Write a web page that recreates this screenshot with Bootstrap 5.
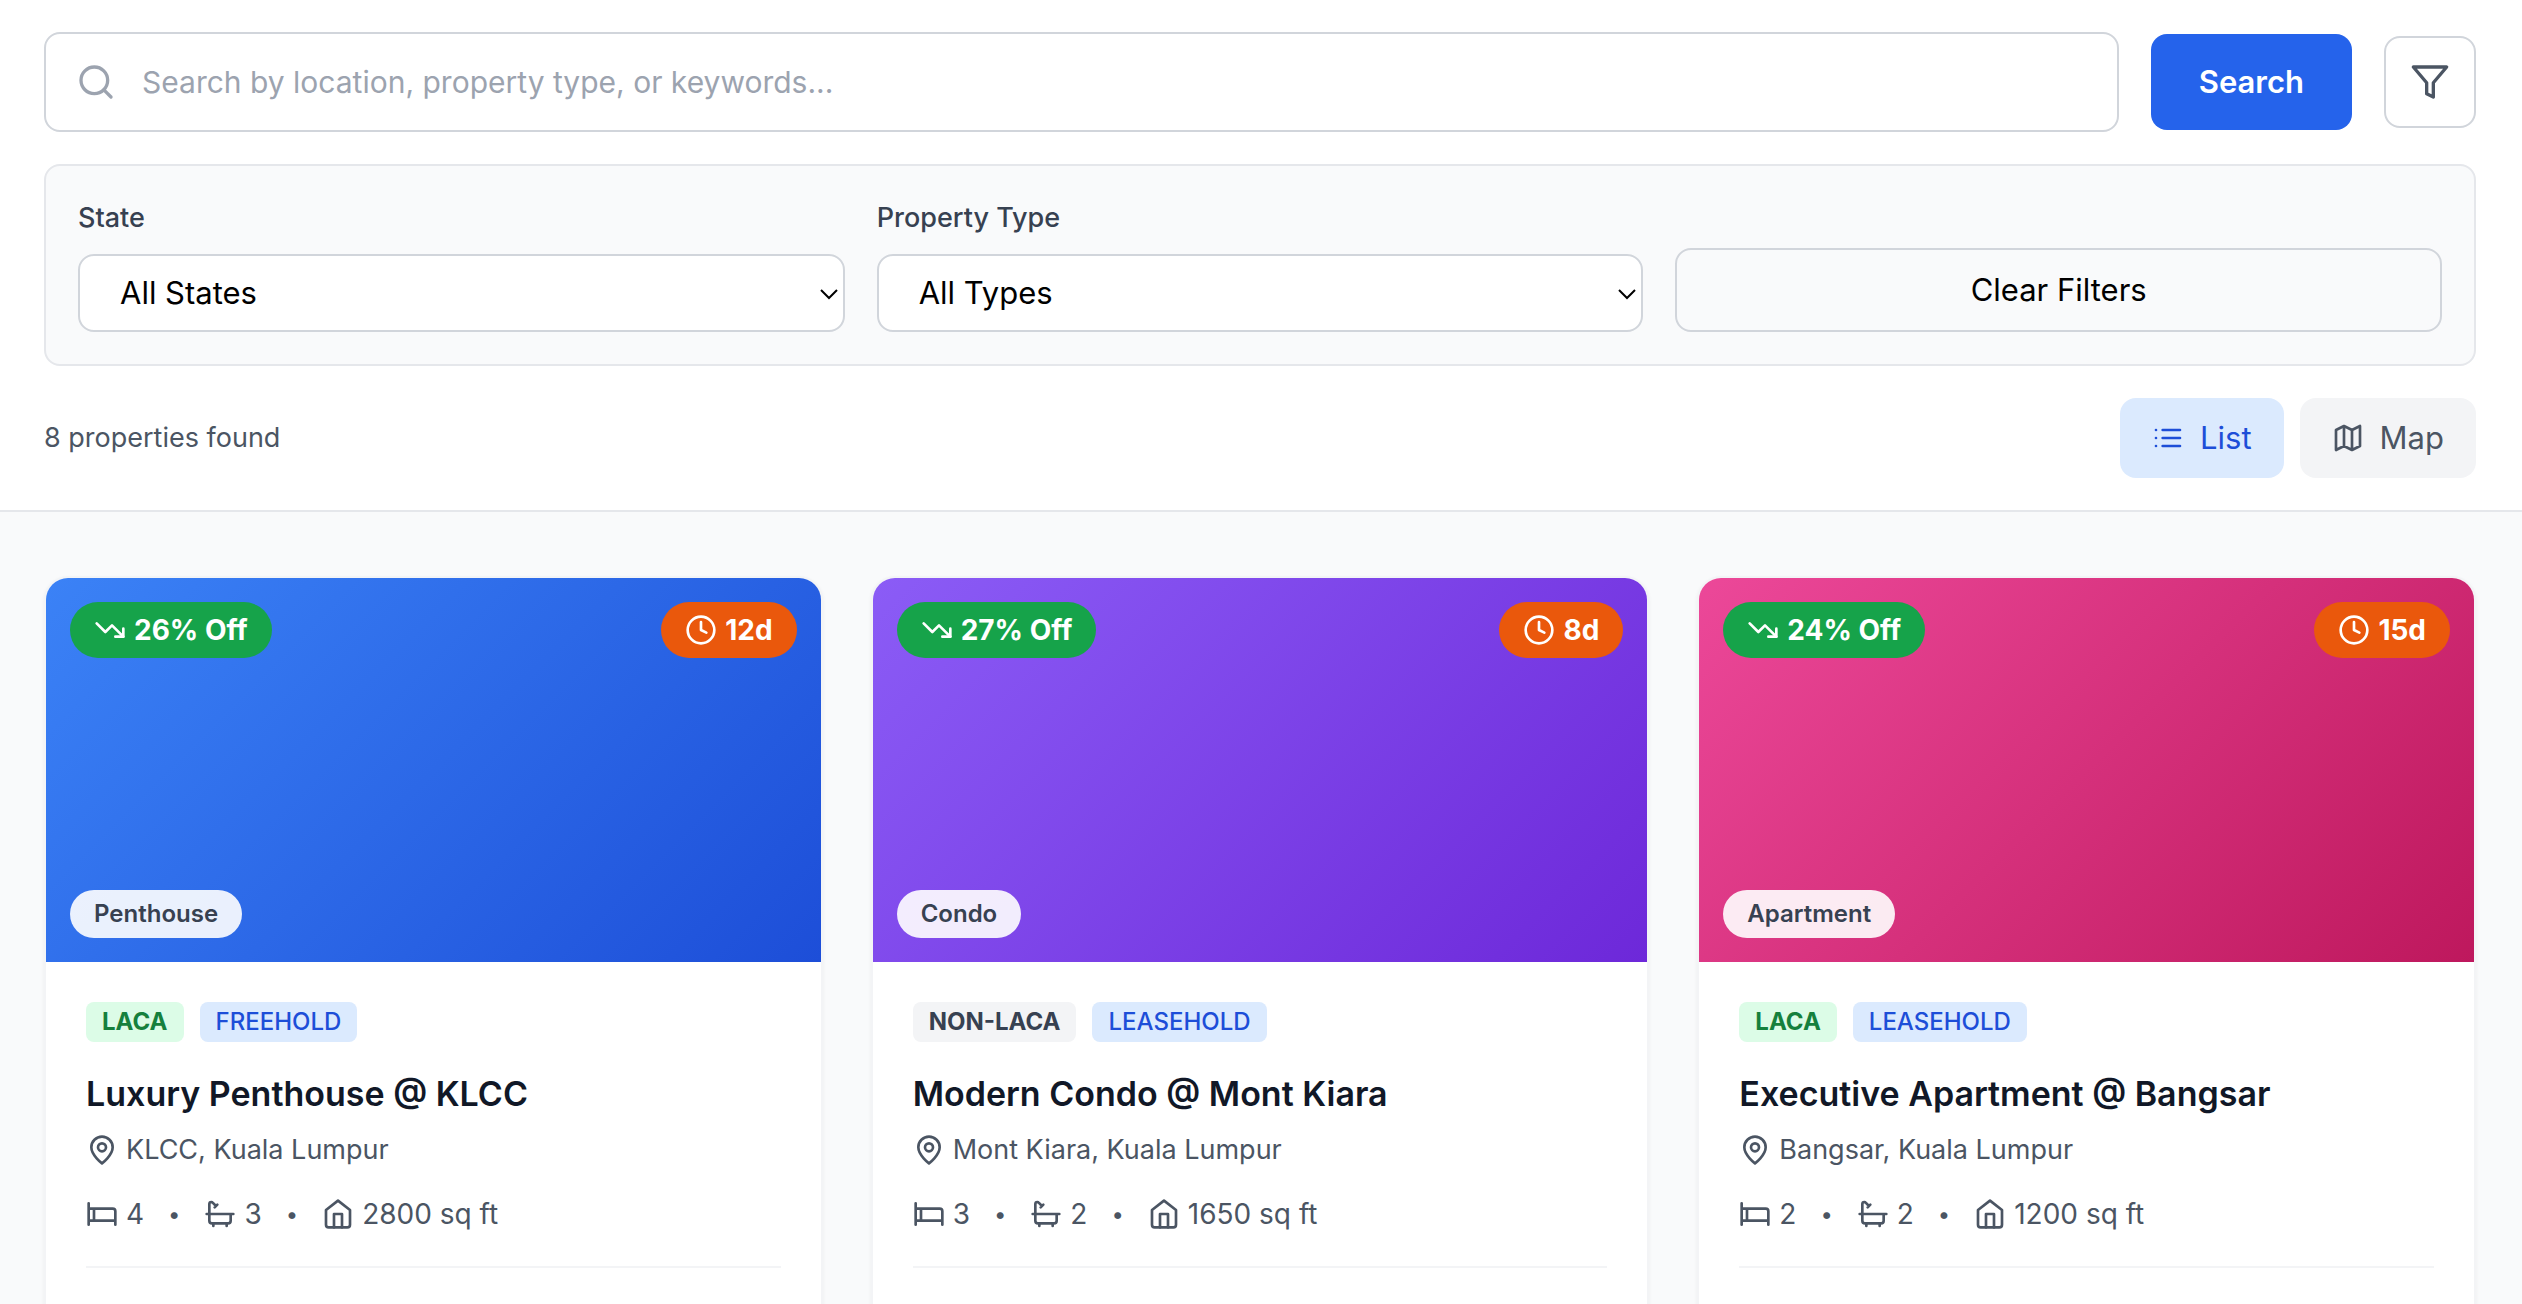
<!DOCTYPE html>
<html lang="en">
<head>
<meta charset="utf-8">
<meta name="viewport" content="width=device-width, initial-scale=1">
<title>Property listings</title>
<link href="https://cdn.jsdelivr.net/npm/bootstrap@5.3.0/dist/css/bootstrap.min.css" rel="stylesheet">
<style>
body{font-family:Inter,"Liberation Sans",sans-serif;font-size:32px;line-height:48px;color:#111827;background:#f9fafb}
.wrap{max-width:2496px;margin:0 auto;padding-left:31px;padding-right:33px}
.ico{width:32px;height:32px;flex:none;fill:none;stroke:currentColor;stroke-width:2;stroke-linecap:round;stroke-linejoin:round}
.ico-lg{width:40px;height:40px}
.topbar{background:#fff;border-bottom:2px solid #e5e7eb;padding:32px 0}
.gap-32{gap:32px}.gap-16{gap:16px}.gap-8{gap:8px}
.search-field{height:100px;border:2px solid #d1d5db;border-radius:16px;padding:0 30px;gap:26px;color:#9ca3af;background:#fff}
.search-field input{border:0;outline:0;background:none;color:#111827;font-size:30px;padding:0;min-width:0}
.search-field input::placeholder{color:#9ca3af;opacity:1}
.btn-search{background:#2563eb;color:#fff;font-weight:600;font-size:31px;line-height:48px;padding:24px 48px;border:0;border-radius:16px}
.btn-filter{width:92px;height:92px;border:2px solid #d1d5db;border-radius:16px;background:#fff;color:#4b5563}
.panel{background:#f9fafb;border:2px solid #e5e7eb;border-radius:16px;padding:32px}
.panel label{font-size:27px;line-height:40px;font-weight:500;color:#374151}
.pick{position:relative;color:#000}
.pick select{appearance:none;width:100%;height:78px;border:2px solid #d1d5db;border-radius:16px;background:#fff;padding:0 40px;font-size:31px;color:#000}
.pick svg{position:absolute;right:6px;top:30px;width:20px;height:20px;pointer-events:none}
.btn-clear{height:84px;border:2px solid #d1d5db;border-radius:16px;background:none;color:#000;font-size:31px}
.found{font-size:27px;line-height:40px;color:#4b5563}
.btn-view{border:0;border-radius:16px;padding:16px 32px;background:#f3f4f6;color:#4b5563;font-size:31px;line-height:48px}
.btn-view.active{background:#dbeafe;color:#1d4ed8}
.listing-grid{padding-top:64px;padding-bottom:64px}
.tiles{display:grid;grid-template-columns:repeat(3,1fr);gap:48px}
.tile{background:#fff;border:2px solid #f3f4f6;border-radius:24px;overflow:hidden;box-shadow:0 2px 4px rgba(0,0,0,.05)}
.photo{height:384px;padding:24px}
.photo-blue{background:linear-gradient(135deg,#3b82f6,#1d4ed8)}
.photo-violet{background:linear-gradient(135deg,#8b5cf6,#6d28d9)}
.photo-pink{background:linear-gradient(135deg,#ec4899,#be185d)}
.pill{border-radius:28px;padding:8px 24px;font-size:28px;line-height:40px;font-weight:700;color:#fff}
.pill-off{background:#16a34a}.pill-days{background:#ea580c}
.pill-kind{border-radius:24px;padding:8px 24px;font-size:24px;line-height:32px;font-weight:600;color:#374151;background:rgba(255,255,255,.9)}
.info{padding:40px 40px 120px}
.tag{border-radius:8px;padding:4px 16px;font-size:24px;line-height:32px;font-weight:500;background:#dbeafe;color:#1d4ed8}
.tag-laca{font-weight:700;background:#dcfce7;color:#15803d}
.tag-non{font-weight:700;background:#f3f4f6;color:#374151}
.tile h2{font-size:34px;line-height:56px;font-weight:600;margin:24px 0 8px;color:#111827}
.meta{font-size:27px;line-height:40px;color:#4b5563}
.facts{font-size:28px;margin-top:24px;padding-bottom:32px;border-bottom:2px solid #f3f4f6;gap:24px}
.sep{font-size:22px}
</style>
</head>
<body>
<header class="topbar">
  <div class="wrap d-flex flex-column gap-32">
    <form class="d-flex align-items-center gap-32" role="search" onsubmit="return false">
      <div class="search-field d-flex align-items-center flex-grow-1">
        <svg class="ico ico-lg" viewBox="0 0 24 24" aria-hidden="true"><circle cx="11" cy="11" r="8"/><path d="m21 21-4.3-4.3"/></svg>
        <input class="flex-grow-1" type="text" aria-label="Search properties" placeholder="Search by location, property type, or keywords...">
      </div>
      <button class="btn btn-search" type="submit">Search</button>
      <button class="btn btn-filter d-flex align-items-center justify-content-center p-0" type="button" aria-label="Filters">
        <svg class="ico ico-lg" viewBox="0 0 24 24" aria-hidden="true"><path d="M22 3H2l8 9.46V19l4 2v-8.54L22 3z"/></svg>
      </button>
    </form>
    <section class="panel d-flex align-items-end gap-32">
      <div class="flex-fill w-100">
        <label class="d-block mb-3" for="state">State</label>
        <div class="pick">
          <select class="d-block" id="state"><option>All States</option></select>
          <svg viewBox="0 0 20 20" fill="none" stroke="currentColor" stroke-width="2" aria-hidden="true"><path d="m2 6 8 8 8-8"/></svg>
        </div>
      </div>
      <div class="flex-fill w-100">
        <label class="d-block mb-3" for="kind">Property Type</label>
        <div class="pick">
          <select class="d-block" id="kind"><option>All Types</option></select>
          <svg viewBox="0 0 20 20" fill="none" stroke="currentColor" stroke-width="2" aria-hidden="true"><path d="m2 6 8 8 8-8"/></svg>
        </div>
      </div>
      <div class="flex-fill w-100"><button class="btn btn-clear w-100" type="button">Clear Filters</button></div>
    </section>
    <div class="d-flex align-items-center justify-content-between">
      <div class="found">8 properties found</div>
      <div class="d-flex gap-16">
        <button class="btn btn-view active d-flex align-items-center gap-16" type="button">
          <svg class="ico" viewBox="0 0 24 24" aria-hidden="true"><path d="M8 6h13M8 12h13M8 18h13M3 6h.01M3 12h.01M3 18h.01"/></svg>List</button>
        <button class="btn btn-view d-flex align-items-center gap-16" type="button">
          <svg class="ico" viewBox="0 0 24 24" aria-hidden="true"><path d="m3 6 6-3 6 3 6-3v15l-6 3-6-3-6 3zM9 3v15M15 6v15"/></svg>Map</button>
      </div>
    </div>
  </div>
</header>

<svg class="d-none" aria-hidden="true">
  <symbol id="i-down" viewBox="0 0 24 24"><path d="m22 17-8.5-8.5-5 5L2 7"/><path d="M16 17h6v-6"/></symbol>
  <symbol id="i-clock" viewBox="0 0 24 24"><circle cx="12" cy="12" r="10"/><path d="M12 6v6l4 2"/></symbol>
  <symbol id="i-pin" viewBox="0 0 24 24"><path d="M20 10c0 6-8 12-8 12s-8-6-8-12a8 8 0 0 1 16 0Z"/><circle cx="12" cy="10" r="3"/></symbol>
  <symbol id="i-bed" viewBox="0 0 24 24"><path d="M2 4v16M2 8h18a2 2 0 0 1 2 2v10M2 17h20M6 8v9"/></symbol>
  <symbol id="i-bath" viewBox="0 0 24 24"><path d="M9 6 6.5 3.5a1.5 1.5 0 0 0-1-.5C4.683 3 4 3.683 4 4.500V17a2 2 0 0 0 2 2h12a2 2 0 0 0 2-2v-5M10 5 8 7M2 12h20M7 19v2M17 19v2"/></symbol>
  <symbol id="i-home" viewBox="0 0 24 24"><path d="m3 9 9-7 9 7v11a2 2 0 0 1-2 2H5a2 2 0 0 1-2-2z"/><path d="M9 22V12h6v10"/></symbol>
</svg>

<main class="wrap listing-grid">
  <div class="tiles">
    <article class="tile">
      <div class="photo photo-blue d-flex flex-column justify-content-between">
        <div class="d-flex justify-content-between">
          <span class="pill pill-off d-flex align-items-center gap-8"><svg class="ico"><use href="#i-down"/></svg>26% Off</span>
          <span class="pill pill-days d-flex align-items-center gap-8"><svg class="ico"><use href="#i-clock"/></svg>12d</span>
        </div>
        <span class="pill-kind align-self-start">Penthouse</span>
      </div>
      <div class="info">
        <div class="d-flex gap-16"><span class="tag tag-laca">LACA</span><span class="tag">FREEHOLD</span></div>
        <h2>Luxury Penthouse @ KLCC</h2>
        <div class="meta d-flex align-items-center gap-8"><svg class="ico"><use href="#i-pin"/></svg>KLCC, Kuala Lumpur</div>
        <div class="meta facts d-flex align-items-center">
          <span class="d-flex align-items-center gap-8"><svg class="ico"><use href="#i-bed"/></svg>4</span><span class="sep">•</span>
          <span class="d-flex align-items-center gap-8"><svg class="ico"><use href="#i-bath"/></svg>3</span><span class="sep">•</span>
          <span class="d-flex align-items-center gap-8"><svg class="ico"><use href="#i-home"/></svg>2800 sq ft</span>
        </div>
      </div>
    </article>
    <article class="tile">
      <div class="photo photo-violet d-flex flex-column justify-content-between">
        <div class="d-flex justify-content-between">
          <span class="pill pill-off d-flex align-items-center gap-8"><svg class="ico"><use href="#i-down"/></svg>27% Off</span>
          <span class="pill pill-days d-flex align-items-center gap-8"><svg class="ico"><use href="#i-clock"/></svg>8d</span>
        </div>
        <span class="pill-kind align-self-start">Condo</span>
      </div>
      <div class="info">
        <div class="d-flex gap-16"><span class="tag tag-non">NON-LACA</span><span class="tag">LEASEHOLD</span></div>
        <h2>Modern Condo @ Mont Kiara</h2>
        <div class="meta d-flex align-items-center gap-8"><svg class="ico"><use href="#i-pin"/></svg>Mont Kiara, Kuala Lumpur</div>
        <div class="meta facts d-flex align-items-center">
          <span class="d-flex align-items-center gap-8"><svg class="ico"><use href="#i-bed"/></svg>3</span><span class="sep">•</span>
          <span class="d-flex align-items-center gap-8"><svg class="ico"><use href="#i-bath"/></svg>2</span><span class="sep">•</span>
          <span class="d-flex align-items-center gap-8"><svg class="ico"><use href="#i-home"/></svg>1650 sq ft</span>
        </div>
      </div>
    </article>
    <article class="tile">
      <div class="photo photo-pink d-flex flex-column justify-content-between">
        <div class="d-flex justify-content-between">
          <span class="pill pill-off d-flex align-items-center gap-8"><svg class="ico"><use href="#i-down"/></svg>24% Off</span>
          <span class="pill pill-days d-flex align-items-center gap-8"><svg class="ico"><use href="#i-clock"/></svg>15d</span>
        </div>
        <span class="pill-kind align-self-start">Apartment</span>
      </div>
      <div class="info">
        <div class="d-flex gap-16"><span class="tag tag-laca">LACA</span><span class="tag">LEASEHOLD</span></div>
        <h2>Executive Apartment @ Bangsar</h2>
        <div class="meta d-flex align-items-center gap-8"><svg class="ico"><use href="#i-pin"/></svg>Bangsar, Kuala Lumpur</div>
        <div class="meta facts d-flex align-items-center">
          <span class="d-flex align-items-center gap-8"><svg class="ico"><use href="#i-bed"/></svg>2</span><span class="sep">•</span>
          <span class="d-flex align-items-center gap-8"><svg class="ico"><use href="#i-bath"/></svg>2</span><span class="sep">•</span>
          <span class="d-flex align-items-center gap-8"><svg class="ico"><use href="#i-home"/></svg>1200 sq ft</span>
        </div>
      </div>
    </article>
  </div>
</main>
<script src="https://cdn.jsdelivr.net/npm/bootstrap@5.3.0/dist/js/bootstrap.bundle.min.js"></script>
</body>
</html>
